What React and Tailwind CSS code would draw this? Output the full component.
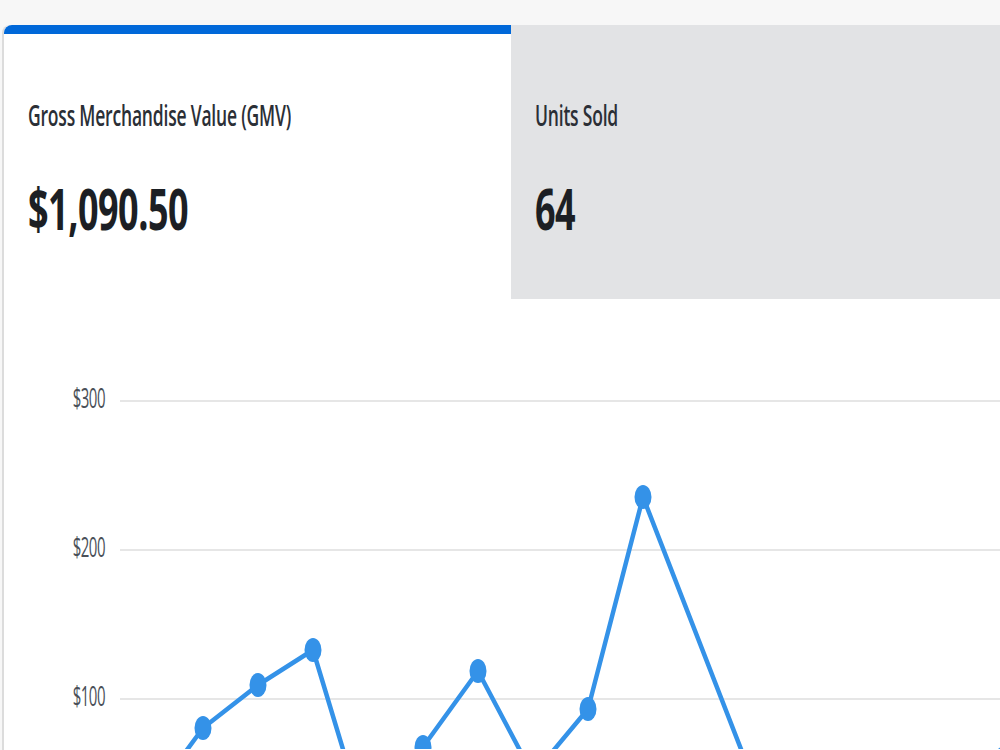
import React from 'react'

const points = [
  [144, 504], [199, 429], [254, 386], [309, 351], [364, 533], [419, 448],
  [474, 372], [529, 476], [584, 410], [639, 198], [749, 481], [804, 540],
  [859, 560], [914, 520], [969, 470], [1024, 432],
]

const visibleDots = points.filter(([, y]) => y < 460)

function Tab({ label, value, active }) {
  return (
    <div
      className={
        active
          ? 'h-[274px] border-t-[9px] border-[#0068d9] bg-white pl-6 rounded-tl-lg'
          : 'h-[274px] bg-[#e2e3e5] pl-6 pt-[9px]'
      }
    >
      <div className="pt-[65px] h-[44px]">
        <span className="inline-block origin-top-left scale-y-160 text-[17.5px] leading-none font-semibold text-[#2b2f36] tracking-[-0.2px]">
          {label}
        </span>
      </div>
      <div className="pt-[81px]">
        <span className="inline-block origin-top-left scale-y-160 text-[36px] leading-none font-bold text-[#1c1f24] tracking-[-0.5px]">
          {value}
        </span>
      </div>
    </div>
  )
}

function Chart() {
  const grid = [
    { y: 102, label: '$300' },
    { y: 251, label: '$200' },
    { y: 400, label: '$100' },
  ]
  return (
    <svg width="998" height="450" className="block" style={{ fontFamily: '"Open Sans", sans-serif' }}>
      {grid.map((g) => (
        <g key={g.label}>
          <line x1="116" x2="998" y1={g.y} y2={g.y} stroke="#e6e6e6" strokeWidth="2" />
          <text
            x="101"
            y={g.y}
            textAnchor="end"
            fontSize="15"
            fontWeight="500"
            fill="#4a5058"
            letterSpacing="-0.5"
            transform={`translate(0 ${g.y}) scale(1 1.8) translate(0 ${-g.y})`}
            dominantBaseline="middle"
          >
            {g.label}
          </text>
        </g>
      ))}
      <polyline
        points={points.map((p) => p.join(',')).join(' ')}
        fill="none"
        stroke="#3492e8"
        strokeWidth="4.5"
        strokeLinejoin="round"
      />
      {visibleDots.map(([x, y]) => (
        <ellipse key={x} cx={x} cy={y} rx="8.5" ry="12" fill="#3492e8" />
      ))}
    </svg>
  )
}

export default function App() {
  return (
    <div className="h-[750px] w-[1000px] overflow-hidden bg-[#f7f7f7] pt-[25px] pl-[2px]" style={{ fontFamily: '"Open Sans", sans-serif' }}>
      <div className="h-full bg-white border-l-2 border-[#dcdcdc] rounded-tl-lg">
        <div className="grid grid-cols-[507px_1fr]">
          <Tab label="Gross Merchandise Value (GMV)" value="$1,090.50" active />
          <Tab label="Units Sold" value="64" />
        </div>
        <Chart />
      </div>
    </div>
  )
}
